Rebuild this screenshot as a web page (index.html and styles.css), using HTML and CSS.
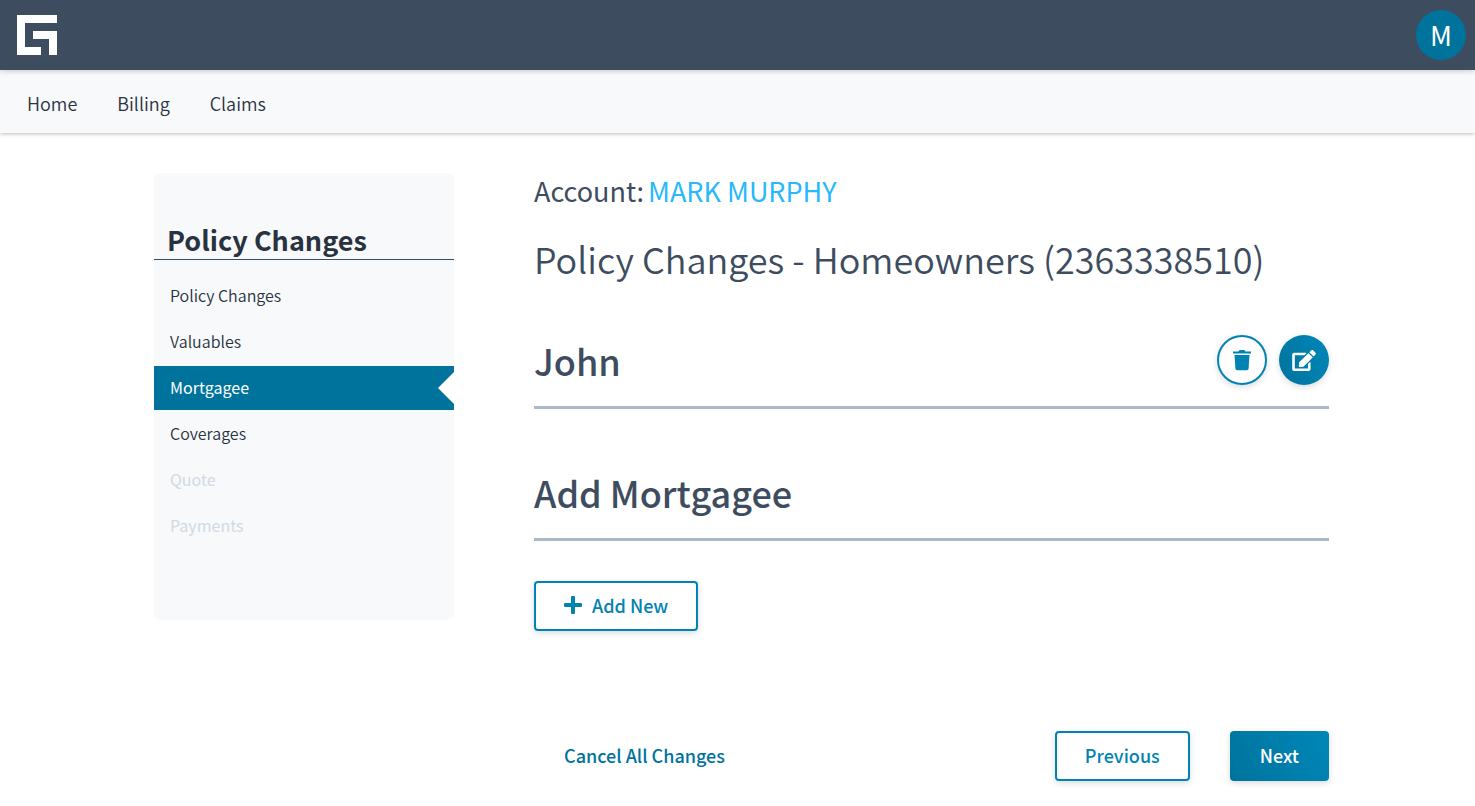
FILE: index.html
```html
<!DOCTYPE html>
<html lang="en">
<head>
<meta charset="utf-8">
<meta name="viewport" content="width=device-width, initial-scale=1">
<title>Policy Changes</title>
<link rel="stylesheet" href="styles.css">
</head>
<body>
<header class="topbar">
  <a class="logo" href="#" aria-label="Home page">
    <svg width="40" height="40" viewBox="0 0 40 40" fill="#fff" aria-hidden="true"><path d="M0 0H40V8H8V32H24V40H0Z"/><path d="M16 16H40V40H32V24H16Z"/></svg>
  </a>
  <button class="avatar" type="button">M</button>
</header>
<nav class="main-nav">
  <a href="#">Home</a>
  <a href="#">Billing</a>
  <a href="#">Claims</a>
</nav>
<main class="page">
  <aside class="wizard">
    <h2 class="wizard-title">Policy Changes</h2>
    <ul class="steps">
      <li><a class="step" href="#">Policy Changes</a></li>
      <li><a class="step" href="#">Valuables</a></li>
      <li><a class="step step-active" href="#" aria-current="step">Mortgagee</a></li>
      <li><a class="step" href="#">Coverages</a></li>
      <li><a class="step step-disabled" href="#" aria-disabled="true">Quote</a></li>
      <li><a class="step step-disabled" href="#" aria-disabled="true">Payments</a></li>
    </ul>
  </aside>
  <section class="content">
    <p class="account"><span>Account:</span> <a href="#">MARK MURPHY</a></p>
    <h1 class="title">Policy Changes - Homeowners (2363338510)</h1>
    <div class="section-head">
      <h2>John</h2>
      <div class="tools">
        <button class="round" type="button" aria-label="Delete">
          <svg width="20" height="22" viewBox="0 0 20 22" fill="#0083b3" aria-hidden="true"><path d="M1 2.500H6.500L7.500 1H12.500L13.500 2.500H19V4.500H1Z"/><path d="M2.500 6H17.500L16.600 19.500Q16.500 21.200 14.800 21.200H5.200Q3.500 21.200 3.400 19.500Z"/></svg>
        </button>
        <button class="round round-filled" type="button" aria-label="Edit">
          <svg width="24" height="21" viewBox="0 0 576 512" fill="#fff" aria-hidden="true"><path d="M402.600 83.200l90.200 90.200c3.800 3.800 3.800 10 0 13.800L274.400 405.600l-92.800 10.300c-12.400 1.400-22.900-9.100-21.500-21.500l10.300-92.800L388.800 83.200c3.800-3.800 10-3.800 13.800 0zm162-22.900l-48.800-48.800c-15.200-15.200-39.900-15.200-55.200 0l-35.400 35.400c-3.800 3.800-3.800 10 0 13.800l90.200 90.200c3.800 3.800 10 3.800 13.800 0l35.400-35.400c15.200-15.300 15.200-40 0-55.200zM384 346.200V448H64V128h229.800c3.200 0 6.200-1.300 8.500-3.500l40-40c7.600-7.600 2.200-20.500-8.500-20.500H48C21.500 64 0 85.500 0 112v352c0 26.500 21.500 48 48 48h352c26.500 0 48-21.500 48-48V306.200c0-10.700-12.900-16-20.500-8.500l-40 40c-2.200 2.300-3.500 5.300-3.500 8.500z"/></svg>
        </button>
      </div>
    </div>
    <div class="section-head">
      <h2>Add Mortgagee</h2>
    </div>
    <button class="btn" type="button">
      <svg width="18" height="18" viewBox="0 0 18 18" fill="#0083b3" aria-hidden="true"><path d="M8 0H10Q11 0 11 1V7H17Q18 7 18 8V10Q18 11 17 11H11V17Q11 18 10 18H8Q7 18 7 17V11H1Q0 11 0 10V8Q0 7 1 7H7V1Q7 0 8 0Z"/></svg>
      <span>Add New</span>
    </button>
    <div class="actions">
      <button class="btn btn-text" type="button">Cancel All Changes</button>
      <button class="btn" type="button">Previous</button>
      <button class="btn btn-primary" type="button">Next</button>
    </div>
  </section>
</main>
</body>
</html>
```
FILE: styles.css
```css
* {
  box-sizing: border-box;
}

body {
  margin: 0;
  background: #fff;
  color: #3d4c5e;
  font-family: "Noto Sans CJK SC", "Noto Sans", sans-serif;
  font-size: 18px;
}

a {
  color: inherit;
  text-decoration: none;
}

button {
  font: inherit;
  cursor: pointer;
}

h1, h2, p, ul {
  margin: 0;
  padding: 0;
}

.topbar {
  position: relative;
  display: flex;
  align-items: center;
  justify-content: space-between;
  height: 70px;
  padding: 0 9px 0 17px;
  background: #3d4c5e;
  box-shadow: 0 1px 6px rgba(0, 0, 0, 0.2);
}

.logo,
.logo svg {
  display: block;
}

.avatar {
  width: 50px;
  height: 50px;
  padding: 0;
  border: 0;
  border-radius: 50%;
  background: #00739d;
  color: #fff;
  font-size: 27px;
  line-height: 48px;
}

.main-nav {
  display: flex;
  align-items: center;
  gap: 40px;
  height: 63px;
  padding: 2px 27px 0;
  background: #f8f9fb;
  box-shadow: 0 1px 4px rgba(0, 0, 0, 0.25);
  color: #28333f;
  font-weight: 350;
  line-height: 24px;
}

.page {
  display: grid;
  grid-template-columns: 300px 1fr;
  gap: 80px;
  align-items: start;
  padding: 40px 146px 24px 154px;
}

.wizard {
  padding: 50px 0 72px;
  border-radius: 6px;
  background: #f8f9fb;
  color: #28333f;
}

.wizard-title {
  padding: 0 13px 2px;
  border-bottom: 1px solid #3d4c5e;
  font-size: 27px;
  font-weight: 700;
  line-height: 34px;
}

.steps {
  display: flex;
  flex-direction: column;
  gap: 2px;
  padding-top: 14px;
  list-style: none;
}

.step {
  position: relative;
  display: block;
  padding: 0 16px 2px;
  font-size: 16px;
  font-weight: 350;
  line-height: 42px;
}

.step-active {
  background: #00739d;
  color: #fff;
  font-weight: 400;
}

.step-active::after {
  content: "";
  position: absolute;
  top: 6px;
  right: 0;
  border: 16px solid transparent;
  border-right-color: #fff;
  border-left-width: 0;
}

.step-disabled {
  color: #d0dae3;
  font-weight: 400;
}

.account {
  display: flex;
  gap: 4px;
  font-size: 27px;
  line-height: 36px;
}

.account a {
  color: #28b8fb;
}

.title {
  margin: 23px 0 50px;
  font-size: 36px;
  font-weight: 350;
  line-height: 52px;
}

.section-head {
  display: flex;
  align-items: center;
  justify-content: space-between;
  min-height: 75px;
  margin-bottom: 57px;
  padding-bottom: 20px;
  border-bottom: 3px solid #abb8ca;
}

.section-head h2 {
  font-size: 36px;
  font-weight: 500;
  line-height: 52px;
}

.section-head + .btn {
  margin-top: -17px;
}

.tools {
  display: flex;
  gap: 12px;
}

.round,
.btn {
  display: flex;
  align-items: center;
  justify-content: center;
  height: 50px;
  border: 2px solid #0083b3;
  background: #fff;
  color: #0083b3;
  box-shadow: 0 2px 6px rgba(0, 0, 0, 0.15);
}

.round {
  width: 50px;
  padding: 0;
  border-radius: 50%;
}

.round-filled,
.btn-primary {
  border: 0;
  background: linear-gradient(60deg, #00739d, #0087b8);
  color: #fff;
}

.btn {
  gap: 10px;
  padding: 0 28px 2px;
  border-radius: 4px;
  font-weight: 500;
  line-height: 24px;
}

.btn-primary {
  padding: 0 30px 2px;
}

.btn-text {
  margin-right: auto;
  border-color: transparent;
  background: transparent;
  box-shadow: none;
  color: #00739d;
}

.actions {
  display: flex;
  gap: 40px;
  margin-top: 100px;
}
```
